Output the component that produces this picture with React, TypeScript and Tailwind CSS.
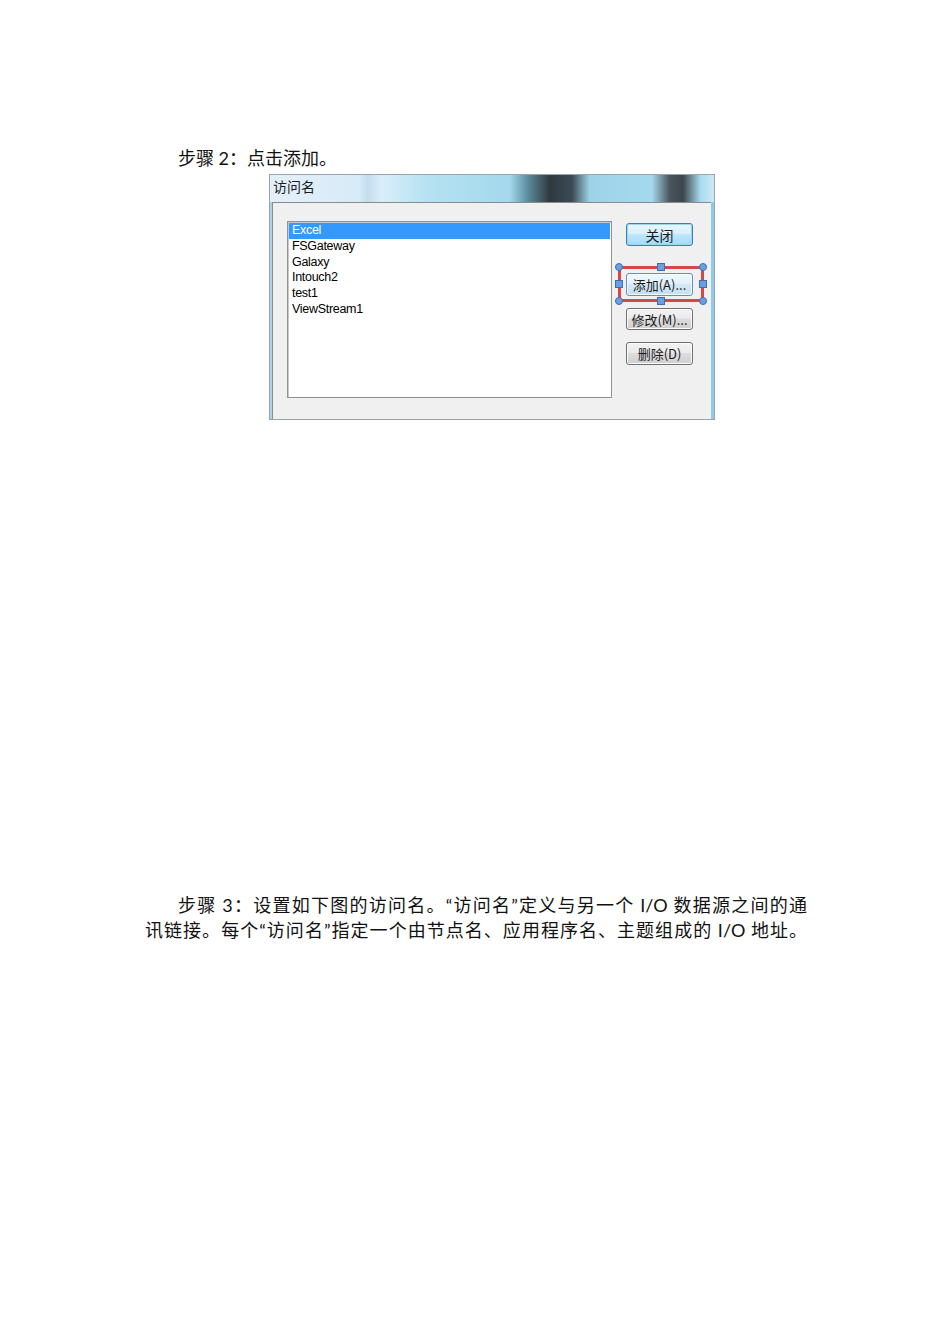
import React from "react";

const items = ["Excel", "FSGateway", "Galaxy", "Intouch2", "test1", "ViewStream1"];

function Handle({ className, round }: { readonly className: string; readonly round?: boolean }): React.ReactElement {
  return (
    <span
      className={`absolute h-[8px] w-[8px] border border-[#3a6fb8] bg-[#6aa0e0] ${round ? "rounded-full" : ""} ${className}`}
    />
  );
}

function WinButton({
  label,
  variant,
  className,
}: {
  readonly label: string;
  readonly variant: "default" | "hover" | "normal";
  readonly className: string;
}): React.ReactElement {
  const look =
    variant === "default"
      ? "border-[#3c7fb1] bg-[linear-gradient(180deg,#eaf6fd_0%,#d9f0fc_45%,#bee6fd_50%,#a7d9f5_100%)] shadow-[inset_0_0_0_1px_#9ad6f0]"
      : variant === "hover"
        ? "border-[#6a8fb0] bg-[linear-gradient(180deg,#f2f8fc_0%,#e3f1fa_45%,#d3e9f6_50%,#c4e0f2_100%)] shadow-[inset_0_0_0_1px_#f5fbff]"
        : "border-[#707070] bg-[linear-gradient(180deg,#f2f2f2_0%,#ebebeb_45%,#dddddd_50%,#cfcfcf_100%)] shadow-[inset_0_0_0_1px_#fbfbfb]";
  return (
    <div
      className={`flex w-[67px] items-center justify-center rounded-[3px] border text-[13px] leading-none text-[#1a1a1a] ${look} ${className}`}
    >
      {label}
    </div>
  );
}

export default function App(): React.ReactElement {
  return (
    <div className="relative h-[1344px] w-[950px] bg-white font-['Lato','Noto_Sans_CJK_SC',sans-serif] text-[#111]">
      <p className="pl-[178px] pt-[146px] text-[18px] leading-[24px]">步骤 2：点击添加。</p>

      <div className="ml-[269px] mt-[4px] flex h-[246px] w-[446px] flex-col border border-[#9aa4ad] font-['Noto_Sans_CJK_SC',sans-serif]">
        <div className="flex h-[27px] items-start bg-[linear-gradient(90deg,#e3f0fa_0%,#d8ebf8_20%,#c3dcef_22%,#d9eef9_25%,#b6e2f2_35%,#a4d8ec_54%,#5d8ea0_58%,#2f3a40_63%,#3c4a52_68%,#9dd2e8_72%,#a6d9ee_86%,#4a565c_90%,#3c464c_93%,#a8dcef_97%,#cfe9f5_100%)] pl-[3px] pt-[2px] text-[14px] leading-[18px] text-[#1c1c1c]">
          访问名
        </div>
        <div className="flex flex-1">
          <div className="w-[2px] bg-[#a9d3ec]" />
          <div className="relative flex flex-1 border-l border-t border-[#8c8c8c] bg-[#f0f0f0]">
            <div className="ml-[14px] mt-[18px] h-[177px] w-[325px] border border-[#8f9296] bg-white p-[1px] font-['Liberation_Sans',sans-serif] text-[12.5px] tracking-[-0.3px] text-black shadow-[inset_1px_1px_0_#c8c8c8]">
              {items.map((it, i) => (
                <div
                  key={it}
                  className={`h-[15.8px] pl-[3px] leading-[15.8px] ${i === 0 ? "bg-[#3399ff] text-white" : ""}`}
                >
                  {it}
                </div>
              ))}
            </div>
            <div className="ml-[14px] flex flex-col">
              <WinButton label="关闭" variant="default" className="mt-[20px] h-[23px] text-[14px]" />
              <WinButton label="添加(A)..." variant="hover" className="mt-[27px] h-[23px]" />
              <WinButton label="修改(M)..." variant="normal" className="mt-[12px] h-[22px]" />
              <WinButton label="删除(D)" variant="normal" className="mt-[12px] h-[23px]" />
            </div>
            <div className="absolute left-[345px] top-[63px] h-[36px] w-[86px] border-[3px] border-[#d44848]">
              <Handle round className="-left-[6px] -top-[6px]" />
              <Handle className="left-[36px] -top-[6px]" />
              <Handle round className="-right-[6px] -top-[6px]" />
              <Handle className="-left-[6px] top-[11px]" />
              <Handle className="-right-[6px] top-[11px]" />
              <Handle round className="-bottom-[6px] -left-[6px]" />
              <Handle className="-bottom-[6px] left-[36px]" />
              <Handle round className="-bottom-[6px] -right-[6px]" />
            </div>
          </div>
          <div className="w-[3px] bg-[#8ccbea]" />
        </div>
      </div>

      <div className="ml-[145px] mt-[473px] w-[662px] text-[18px] leading-[25px]">
        <p className="pl-[33px] [text-align-last:justify]">
          步骤 3：设置如下图的访问名。“访问名”定义与另一个 I/O 数据源之间的通
        </p>
        <p className="[text-align-last:justify]">
          讯链接。每个“访问名”指定一个由节点名、应用程序名、主题组成的 I/O 地址。
        </p>
      </div>
    </div>
  );
}
